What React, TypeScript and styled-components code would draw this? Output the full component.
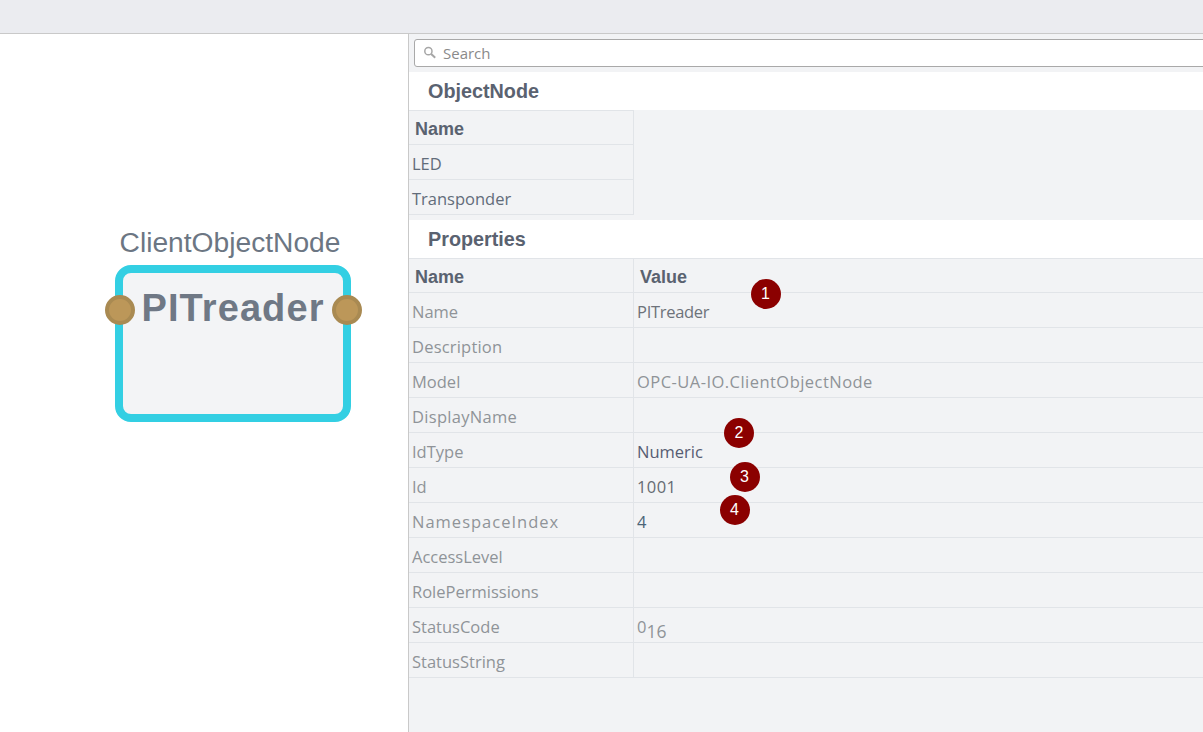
import React from "react";
import styled, { createGlobalStyle } from "styled-components";

const GlobalStyle = createGlobalStyle`
  html, body {
    margin: 0;
    height: 100%;
    overflow: hidden;
    background: #fff;
    font-family: "Open Sans", "Liberation Sans", sans-serif;
  }
  #root {
    height: 100%;
  }
`;

const Subscript = styled.sub`
  font-size: 17.5px;
  line-height: 0;
  vertical-align: -5px;
`;

const inputs = [
  { name: "LED" },
  { name: "Transponder" },
];

type Property = {
  name: string;
  value?: React.ReactNode;
  tone?: string;
  nameSpacing?: number;
  valueSpacing?: number;
};

const properties: Property[] = [
  { name: "Name", value: "PITreader", tone: "#6d727a", valueSpacing: -0.3 },
  { name: "Description", nameSpacing: 0.2 },
  { name: "Model", value: "OPC-UA-IO.ClientObjectNode", tone: "#8f9398", valueSpacing: 0.46 },
  { name: "DisplayName", nameSpacing: 0.3 },
  { name: "IdType", value: "Numeric", tone: "#565c72" },
  { name: "Id", value: "1001", tone: "#666b72", valueSpacing: 0.4 },
  { name: "NamespaceIndex", value: "4", tone: "#4b6578", nameSpacing: 1 },
  { name: "AccessLevel" },
  { name: "RolePermissions" },
  {
    name: "StatusCode",
    value: (
      <>
        0<Subscript>16</Subscript>
      </>
    ),
    tone: "#8f9398",
  },
  { name: "StatusString" },
];

const badges = [
  { n: 1, x: 765.5, y: 293.5 },
  { n: 2, x: 739, y: 432.5 },
  { n: 3, x: 744.5, y: 476.5 },
  { n: 4, x: 734.5, y: 509.5 },
];

export default function App() {
  return (
    <>
      <GlobalStyle />
      <Page>
        <TopBar />
        <Main>
          <Canvas>
            <NodeLabel>ClientObjectNode</NodeLabel>
            <Node>
              <NodeTitle>PITreader</NodeTitle>
              <Port $side="left" />
              <Port $side="right" />
            </Node>
          </Canvas>
          <Panel>
            <SearchBox>
              <svg width="14" height="14" viewBox="0 0 14 14" fill="none">
                <circle cx="5.4" cy="5.2" r="3.6" stroke="#a6a6a6" strokeWidth="1.5" />
                <path d="M8.2 8l4 3.8" stroke="#a6a6a6" strokeWidth="2" />
              </svg>
              <SearchText>Search</SearchText>
            </SearchBox>
            <SectionTitle>ObjectNode</SectionTitle>
            <NarrowTable>
              <HeadRow>
                <HeadCell>Name</HeadCell>
              </HeadRow>
              {inputs.map((row) => (
                <Row key={row.name}>
                  <NameCell $tone="#626c7a">{row.name}</NameCell>
                </Row>
              ))}
            </NarrowTable>
            <SectionTitle $gap>Properties</SectionTitle>
            <WideTable>
              <HeadRow>
                <HeadCell>Name</HeadCell>
                <HeadCell>Value</HeadCell>
              </HeadRow>
              {properties.map((row) => (
                <Row key={row.name}>
                  <NameCell $tone="#8f9398" $spacing={row.nameSpacing}>
                    {row.name}
                  </NameCell>
                  <ValueCell $tone={row.tone} $spacing={row.valueSpacing}>
                    {row.value}
                  </ValueCell>
                </Row>
              ))}
            </WideTable>
          </Panel>
        </Main>
        {badges.map((b) => (
          <Badge key={b.n} style={{ left: b.x - 15, top: b.y - 15 }}>
            {b.n}
          </Badge>
        ))}
      </Page>
    </>
  );
}

const Page = styled.div`
  position: relative;
  display: flex;
  flex-direction: column;
  height: 100%;
  overflow: hidden;
`;

const TopBar = styled.div`
  height: 33px;
  flex: none;
  background: #ebecf0;
  border-bottom: 1px solid #c9c9c9;
`;

const Main = styled.div`
  flex: 1;
  display: flex;
  min-height: 0;
`;

const Canvas = styled.div`
  position: relative;
  width: 408px;
  flex: none;
  background: #fff;
  border-right: 1px solid #c9c9c9;
`;

const NodeLabel = styled.div`
  position: absolute;
  left: 115px;
  top: 190px;
  width: 230px;
  text-align: center;
  font: 28.2px/36px "Liberation Sans", Arial, sans-serif;
  color: #6c7683;
  white-space: nowrap;
`;

const Node = styled.div`
  position: absolute;
  left: 115px;
  top: 231px;
  width: 236px;
  height: 157px;
  box-sizing: border-box;
  background: #f3f4f6;
  border: 8px solid #33cfe3;
  border-radius: 16px;
`;

const NodeTitle = styled.div`
  text-align: center;
  font: bold 38px/44px "Liberation Sans", Arial, sans-serif;
  letter-spacing: 1.1px;
  color: #6f7885;
  margin-top: 13px;
  white-space: nowrap;
`;

const Port = styled.div<{ $side: "left" | "right" }>`
  position: absolute;
  top: 22px;
  ${(p) => (p.$side === "left" ? "left: -18px;" : "right: -19px;")}
  width: 30px;
  height: 30px;
  box-sizing: border-box;
  border-radius: 50%;
  background: #bc9759;
  border: 4px solid #a98a52;
`;

const Panel = styled.div`
  flex: 1;
  min-width: 0;
  overflow: hidden;
  background: #f2f3f5;
`;

const SearchBox = styled.div`
  display: flex;
  align-items: center;
  gap: 6px;
  box-sizing: border-box;
  height: 28px;
  margin: 5px -10px 5px 5px;
  padding-left: 8px;
  background: #fff;
  border: 1px solid #a9a9a9;
  border-radius: 3px;
`;

const SearchText = styled.span`
  font-size: 15px;
  color: #8a8a8a;
`;

const SectionTitle = styled.div<{ $gap?: boolean }>`
  height: 38px;
  margin-top: ${(p) => (p.$gap ? "5px" : "0")};
  padding-left: 19px;
  background: #fff;
  font: bold 19.8px/38px "Liberation Sans", Arial, sans-serif;
  color: #5a6270;
`;

const NarrowTable = styled.div`
  width: 225px;
  border-right: 1px solid #e1e4e8;
  border-top: 1px solid #e1e4e8;
  box-sizing: border-box;
`;

const WideTable = styled.div`
  border-top: 1px solid #e1e4e8;
`;

const Row = styled.div`
  display: flex;
  height: 35px;
  box-sizing: border-box;
  border-bottom: 1px solid #e1e4e8;
`;

const HeadRow = styled(Row)`
  height: 34px;
`;

const HeadCell = styled.div`
  box-sizing: border-box;
  padding-left: 6px;
  font: bold 18px/36px "Liberation Sans", Arial, sans-serif;
  color: #5a6270;
  &:first-child {
    width: 225px;
    flex: none;
    border-right: 1px solid #e1e4e8;
  }
`;

const NameCell = styled.div<{ $tone: string; $spacing?: number }>`
  width: 224px;
  flex: none;
  box-sizing: border-box;
  padding-left: 3px;
  font-size: 16.5px;
  line-height: 38px;
  letter-spacing: ${(p) => p.$spacing ?? 0}px;
  color: ${(p) => p.$tone};
  ${WideTable} & {
    width: 225px;
    border-right: 1px solid #e1e4e8;
  }
`;

const ValueCell = styled.div<{ $tone?: string; $spacing?: number }>`
  padding-left: 3px;
  font-size: 16.5px;
  line-height: 38px;
  letter-spacing: ${(p) => p.$spacing ?? 0}px;
  white-space: nowrap;
  color: ${(p) => p.$tone ?? "inherit"};
`;

const Badge = styled.div`
  position: absolute;
  width: 30px;
  height: 30px;
  border-radius: 50%;
  background: #8b0000;
  color: #fff;
  text-align: center;
  font: 16px/30px "Liberation Sans", Arial, sans-serif;
`;
